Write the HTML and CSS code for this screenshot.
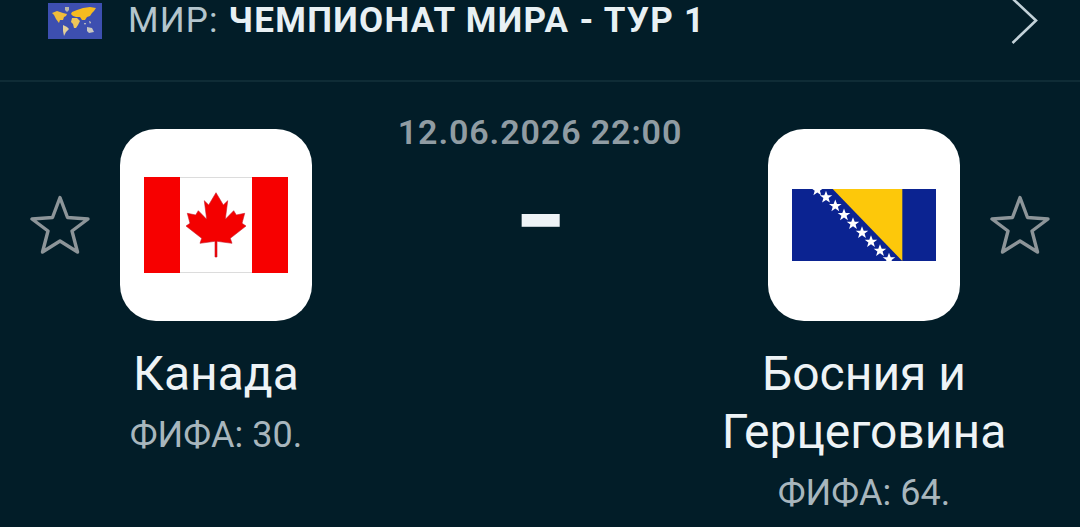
FILE: index.html
```html
<!DOCTYPE html>
<html lang="ru">
<head>
<meta charset="utf-8">
<title>Канада - Босния и Герцеговина</title>
<link rel="stylesheet" href="styles.css">
</head>
<body>
<svg class="defs" width="0" height="0" aria-hidden="true">
  <defs>
    <symbol id="star" viewBox="0 0 60 60">
      <path d="M30 2.500 37.500 22.500 58 24 42 36 47.500 57 30 46 12.500 57 18 36 2 24 22.500 22.500Z" fill="none" stroke="#8d9599" stroke-width="3.400" stroke-linejoin="round"/>
    </symbol>
  </defs>
</svg>
<header class="league">
  <svg class="league-flag" viewBox="0 0 54 36" aria-hidden="true">
    <rect width="54" height="36" fill="#3d4fb0"/>
    <path d="M4 10 9 8 15 10 19 11 18 13 16 14 15 17 12 17 11 20 8 16 6 12Z" fill="#f0bc3a"/>
    <path d="M17 4 21 4 21 7 19 9 17 7Z" fill="#b9b7a8"/>
    <path d="M15 22 19 24 21 26 18 29 16 33 15 28Z" fill="#e3cf9a"/>
    <path d="M24 9 29 7 35 5 42 4 48 5 46 8 44 10 42 13 39 14 37 17 34 17 32 14 28 14 25 13 23 11Z" fill="#f6bb1f"/>
    <path d="M24 15 29 15 32 18 30 22 28 25 26 25 25 21 23 19Z" fill="#eec65a"/>
    <path d="M39 24 44 25 46 29 41 30 39 28Z" fill="#c9c7c0"/>
    <path d="M36 20 38 20 37 22ZM41 18 43 19 42 21Z" fill="#d8d4c2"/>
  </svg>
  <h1 class="league-title">МИР: <b>ЧЕМПИОНАТ МИРА - ТУР 1</b></h1>
  <svg class="chevron" viewBox="0 0 30 46" aria-hidden="true">
    <path d="M3-1 26 20.500 2.500 43" fill="none" stroke="#c3d2d9" stroke-width="2.600"/>
  </svg>
</header>
<main class="match">
  <section class="team">
    <div class="logo-row">
      <svg class="star"><use href="#star"/></svg>
      <div class="logo">
        <svg class="flag-ca" viewBox="0 0 144 96" aria-hidden="true">
          <rect width="144" height="96" fill="#fff"/>
          <path d="M36 .5H108M36 95.500H108" stroke="#dcdcdc"/>
          <path d="M0 0H36V96H0ZM108 0H144V96H108Z" fill="#f70000"/>
          <path d="M72 15.700 79.300 28 83.700 23.700 81.300 42.300 89.700 33.700 92.300 38 100.700 36.300 98 46.300 102 49 86.300 61.300 88 66.300 73 64.300V80H71V64.300L56 66.300 57.700 61.300 42 49 46 46.300 43.300 36.300 51.700 38 54.300 33.700 62.700 42.300 60.300 23.700 64.700 28Z" fill="#f40000" stroke="#c81a2a" stroke-width=".6"/>
        </svg>
      </div>
      <span></span>
    </div>
    <h2 class="team-name">Канада</h2>
    <p class="rank">ФИФА: 30.</p>
  </section>
  <section class="center">
    <time class="date">12.06.2026 22:00</time>
    <div class="score">–</div>
  </section>
  <section class="team">
    <div class="logo-row">
      <span></span>
      <div class="logo">
        <svg class="flag-ba" viewBox="0 0 144 72" aria-hidden="true">
          <defs>
            <path id="s" d="M0-6.500 1.700-2 6.300-2 2.600.8 3.900 5.300 0 2.600-3.900 5.300-2.600.8-6.300-2-1.700-2Z" fill="#fff"/>
          </defs>
          <rect width="144" height="72" fill="#0b2391"/>
          <path d="M40.700 0H110.300V72Z" fill="#fdc80a"/>
          <use href="#s" x="25.300" y="1"/><use href="#s" x="34" y="8.300"/><use href="#s" x="43.300" y="17"/><use href="#s" x="52" y="26"/><use href="#s" x="61" y="34.700"/><use href="#s" x="70" y="43.700"/><use href="#s" x="79" y="52.700"/><use href="#s" x="88" y="61.700"/><use href="#s" x="97" y="70.300"/>
        </svg>
      </div>
      <svg class="star"><use href="#star"/></svg>
    </div>
    <h2 class="team-name">Босния и<br>Герцеговина</h2>
    <p class="rank">ФИФА: 64.</p>
  </section>
</main>
</body>
</html>
```

FILE: styles.css
```css
html, body {
  margin: 0;
  height: 527px;
  overflow: hidden;
  background: #021d28;
  font-family: Roboto, "Liberation Sans", sans-serif;
}
.defs { position: absolute; }
.league {
  display: flex;
  align-items: flex-start;
  height: 82px;
  box-sizing: border-box;
  border-bottom: 2px solid #0f2c36;
  padding-left: 48px;
}
.league-flag { width: 54px; height: 36px; margin: 3px 26px 0 0; flex: none; }
.league-title {
  margin: 0;
  flex: 1;
  font-size: 35px;
  line-height: 42px;
  font-weight: 400;
  letter-spacing: 1.15px;
  white-space: nowrap;
  color: #b4c5cd;
}
.league-title b { font-weight: 700; letter-spacing: 1.33px; color: #e8f0f4; }
.chevron { width: 30px; height: 46px; flex: none; margin-right: 40px; }
.match {
  display: grid;
  grid-template-columns: 432px minmax(0, 1fr) 432px;
}
.team { padding-top: 47px; text-align: center; }
.logo-row {
  display: grid;
  grid-template-columns: 1fr 192px 1fr;
  align-items: center;
  justify-items: center;
}
.star { width: 60px; height: 60px; }
.logo {
  width: 192px;
  height: 192px;
  border-radius: 36px;
  background: #fff;
  display: flex;
  align-items: center;
  justify-content: center;
}
.flag-ca { width: 144px; height: 96px; }
.flag-ba { width: 144px; height: 72px; }
.team-name {
  margin: 24px 0 0;
  font-size: 48px;
  line-height: 58px;
  font-weight: 400;
  color: #eef3f6;
}
.rank {
  margin: 12px 0 0;
  font-size: 36px;
  line-height: 40px;
  color: #a8b6bd;
}
.center {
  display: flex;
  flex-direction: column;
  align-items: center;
  padding-top: 31px;
}
.date {
  font-size: 34px;
  line-height: 38px;
  font-weight: 600;
  letter-spacing: .9px;
  white-space: nowrap;
  color: #909ca3;
}
.score {
  margin-top: 51px;
  font-size: 64px;
  line-height: 40px;
  font-weight: 700;
  color: #eef3f6;
  -webkit-text-stroke: 5.5px #eef3f6;
}
```
